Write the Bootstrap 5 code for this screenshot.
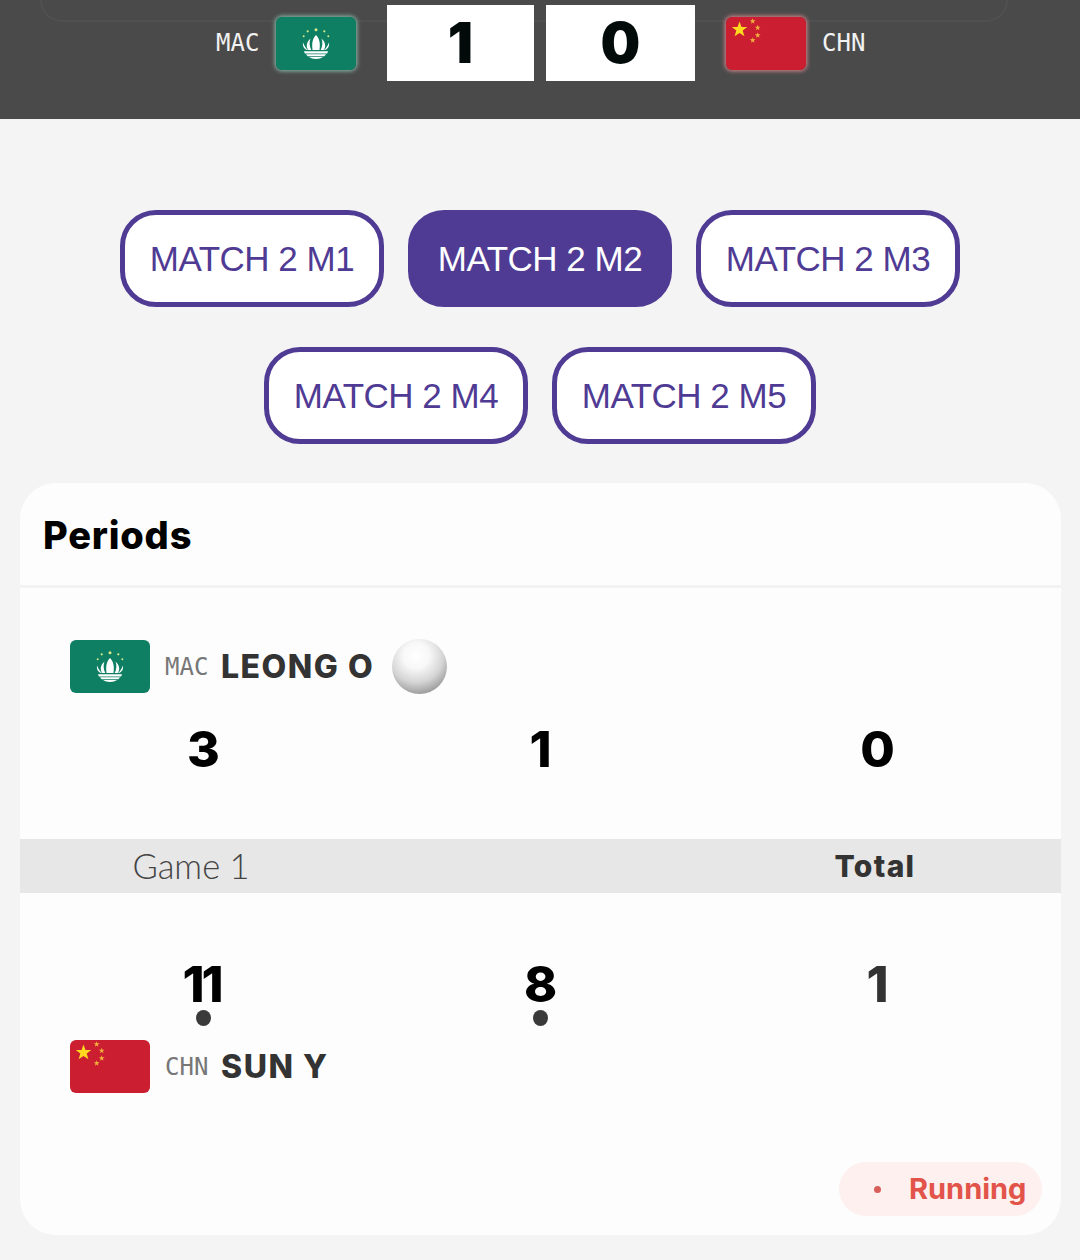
<!DOCTYPE html>
<html lang="en">
<head>
  <meta charset="UTF-8">
  <meta name="viewport" content="width=device-width, initial-scale=1.0">
  <title>Periods</title>
  <link href="https://cdn.jsdelivr.net/npm/bootstrap@5.3.1/dist/css/bootstrap.min.css" rel="stylesheet">
  <style>
    body {
      background: #f4f4f4;
      font-family: "Inter", sans-serif;
      overflow: hidden;
    }
    .score-bar {
      height: 119px;
      background: #4a4a4a;
      padding-top: 5px;
    }
    .score-bar-tab {
      height: 22px;
      margin: -5px 72px -17px 40px;
      border: solid #505050;
      border-width: 0 2px 2px;
      border-radius: 0 0 30px 30px;
    }
    .score-row { padding-left: 2px; }
    .score-code {
      width: 44px;
      color: #f2f2f2;
      font: 24px/1 "DejaVu Sans Mono", monospace;
    }
    .score-box {
      height: 76px;
      background: #fff;
      color: #020a0a;
      font-size: 56px;
      font-weight: 900;
      line-height: 76px;
      text-align: center;
    }
    .score-left { width: 147px; margin: 0 6px 0 31px; }
    .score-right { width: 149px; margin: 0 31px 0 6px; }
    .flag-svg {
      display: block;
      width: 80px;
      height: 53px;
      border-radius: 6px;
    }
    .glow-green { box-shadow: 0 0 4px 1px #8fbfae; }
    .glow-red { box-shadow: 0 0 4px 1px #d98a90; }
    .match-tabs {
      padding: 91px 0 39px;
      row-gap: 40px;
      column-gap: 24px;
    }
    .match-btn {
      width: 264px;
      height: 97px;
      padding: 0;
      border: 5px solid #4f3b94;
      border-radius: 36px;
      background: #fff;
      color: #4f3b94;
      font: 35px/1 "Liberation Sans", sans-serif;
      letter-spacing: -.5px;
    }
    .match-btn.current {
      background: #4f3b94;
      color: #fff;
    }
    .periods-card {
      height: 752px;
      margin: 0 19px 0 20px;
      border: 0;
      border-radius: 36px;
      background: #fdfdfd;
    }
    .periods-head {
      height: 105px;
      padding: 28px 23px 0;
      border-bottom: 3px solid #f3f3f3;
      color: #000;
      font-size: 38px;
      font-weight: 800;
      letter-spacing: .8px;
      line-height: 48px;
    }
    .player-row {
      height: 53px;
      padding-left: 50px;
      gap: 15px;
    }
    .player-a { margin-top: 52px; }
    .player-b { margin-top: 14px; }
    .player-code {
      width: 44px;
      color: #777;
      font: 24px/1 "DejaVu Sans Mono", monospace;
    }
    .player-name {
      margin-left: -3px;
      color: #333;
      font-size: 32px;
      font-weight: 800;
      letter-spacing: 1.5px;
      line-height: 1;
    }
    .ball {
      width: 55px;
      height: 55px;
      margin-left: 3px;
      border-radius: 50%;
      background: radial-gradient(circle 46px at 44% 30%, #fff 0, #f8f8f8 28%, #d6d6d6 58%, #a2a2a2 82%, #777 100%);
    }
    .score-cols {
      display: grid;
      grid-template-columns: repeat(3, 337px);
      margin: 0 15px;
      text-align: center;
    }
    .scores-a { margin-top: 25px; margin-bottom: 59px; }
    .scores-b { margin-top: 60px; }
    .point {
      height: 62px;
      color: #000;
      font-size: 50px;
      font-weight: 800;
      line-height: 62px;
    }
    .point.tight {
      padding-right: 4px;
      letter-spacing: -3px;
    }
    .point.total-point { color: #333; }
    .game-bar {
      height: 54px;
      margin: 0;
      padding: 0 15px;
      background: #e7e7e7;
      align-items: center;
    }
    .game-name {
      padding-right: 25px;
      color: #444;
      font: 300 34.500px/1 "Lato", sans-serif;
    }
    .game-total {
      padding-right: 5px;
      color: #333;
      font-size: 30px;
      font-weight: 800;
      letter-spacing: 1.3px;
      line-height: 1;
    }
    .serve-dot {
      width: 15px;
      height: 16px;
      margin: -5px auto 0;
      border-radius: 50%;
      background: #3a3a3a;
    }
    .status-pill {
      width: 203px;
      height: 54px;
      margin: 0 19px 19px auto;
      border-radius: 27px;
      background: #fdf0ee;
      color: #e2534a;
      font-size: 29px;
      font-weight: 700;
    }
    .status-dot {
      width: 7px;
      height: 7px;
      margin: 0 28px 0 35px;
      border-radius: 50%;
      background: #d9605a;
    }
  </style>
</head>
<body>
  <svg width="0" height="0" class="d-block">
    <defs>
      <polygon id="small-star" points="0,-3 .7,-1 2.900,-1 1.100,.4 1.800,2.500 0,1.200 -1.800,2.500 -1.100,.4 -2.900,-1 -.7,-1"/>
      <symbol id="flag-mac" viewBox="0 0 80 53">
        <rect width="80" height="53" fill="#0f7f63"/>
        <g fill="#d8e98a">
          <circle cx="40" cy="12.700" r="1.500"/><circle cx="31.700" cy="14.300" r="1.100"/><circle cx="48.300" cy="14.300" r="1.100"/>
          <circle cx="27.700" cy="19.300" r="1"/><circle cx="52.300" cy="19.300" r="1"/>
        </g>
        <g fill="#fff">
          <path d="M40 18c3 3 4.500 7 3.500 15h-7c-1-8 .5-12 3.500-15z"/>
          <path d="M34.500 21.500c-1.500 3.500-1 8 .8 11.500h-3c-2.500-3-2-8 2.200-11.500zM45.500 21.500c1.500 3.500 1 8-.8 11.500h3c2.500-3 2-8-2.200-11.500z"/>
          <path d="M27 25.500c1.500 3.500 3 6 5 7.500h-1c-3-1-4.500-4-4-7.500zM53 25.500c-1.500 3.500-3 6-5 7.500h1c3-1 4.500-4 4-7.500z"/>
          <path d="M28 34.200h24c-.2 1-.5 1.600-1 2.200H29c-.5-.6-.8-1.200-1-2.200z"/>
          <path d="M30 37.300h20c-.5.8-1 1.400-1.700 1.900H31.700c-.7-.5-1.200-1.100-1.700-1.900z"/>
          <path d="M33 40h14c-1.800 1.300-4.200 2-7 2s-5.200-.7-7-2z"/>
        </g>
      </symbol>
      <symbol id="flag-chn" viewBox="0 0 80 53">
        <rect width="80" height="53" fill="#cb1f31"/>
        <polygon fill="#ffd81f" points="13.500,4.500 15.500,10 21.300,10.100 16.700,13.600 18.400,19.200 13.500,15.900 8.600,19.200 10.300,13.600 5.700,10.100 11.500,10"/>
        <g fill="#f2b23c">
          <use href="#small-star" x="26.700" y="4.300"/>
          <use href="#small-star" x="31.700" y="10.700"/>
          <use href="#small-star" x="31.700" y="18.300"/>
          <use href="#small-star" x="26.700" y="23.300"/>
        </g>
      </symbol>
    </defs>
  </svg>

  <div class="score-bar">
    <div class="score-bar-tab"></div>
    <div class="score-row d-flex align-items-center justify-content-center">
      <div class="score-code me-3">MAC</div>
      <svg class="flag-svg glow-green"><use href="#flag-mac"/></svg>
      <div class="score-box score-left">1</div>
      <div class="score-box score-right">0</div>
      <svg class="flag-svg glow-red"><use href="#flag-chn"/></svg>
      <div class="score-code ms-3">CHN</div>
    </div>
  </div>

  <div class="match-tabs d-flex flex-wrap justify-content-center">
    <button type="button" class="btn match-btn">MATCH 2 M1</button>
    <button type="button" class="btn match-btn current">MATCH 2 M2</button>
    <button type="button" class="btn match-btn">MATCH 2 M3</button>
    <button type="button" class="btn match-btn">MATCH 2 M4</button>
    <button type="button" class="btn match-btn">MATCH 2 M5</button>
  </div>

  <div class="card periods-card overflow-hidden">
    <div class="periods-head">Periods</div>

    <div class="player-row player-a d-flex align-items-center">
      <svg class="flag-svg"><use href="#flag-mac"/></svg>
      <span class="player-code">MAC</span>
      <span class="player-name">LEONG O</span>
      <span class="ball"></span>
    </div>
    <div class="score-cols scores-a">
      <div class="point">3</div>
      <div class="point">1</div>
      <div class="point">0</div>
    </div>

    <div class="score-cols game-bar">
      <div class="game-name">Game 1</div>
      <div></div>
      <div class="game-total">Total</div>
    </div>

    <div class="score-cols scores-b">
      <div>
        <div class="point tight">11</div>
        <div class="serve-dot"></div>
      </div>
      <div>
        <div class="point">8</div>
        <div class="serve-dot"></div>
      </div>
      <div class="point total-point">1</div>
    </div>

    <div class="player-row player-b d-flex align-items-center">
      <svg class="flag-svg"><use href="#flag-chn"/></svg>
      <span class="player-code">CHN</span>
      <span class="player-name">SUN Y</span>
    </div>

    <div class="status-pill d-flex align-items-center mt-auto">
      <span class="status-dot"></span>
      <span>Running</span>
    </div>
  </div>
</body>
</html>
